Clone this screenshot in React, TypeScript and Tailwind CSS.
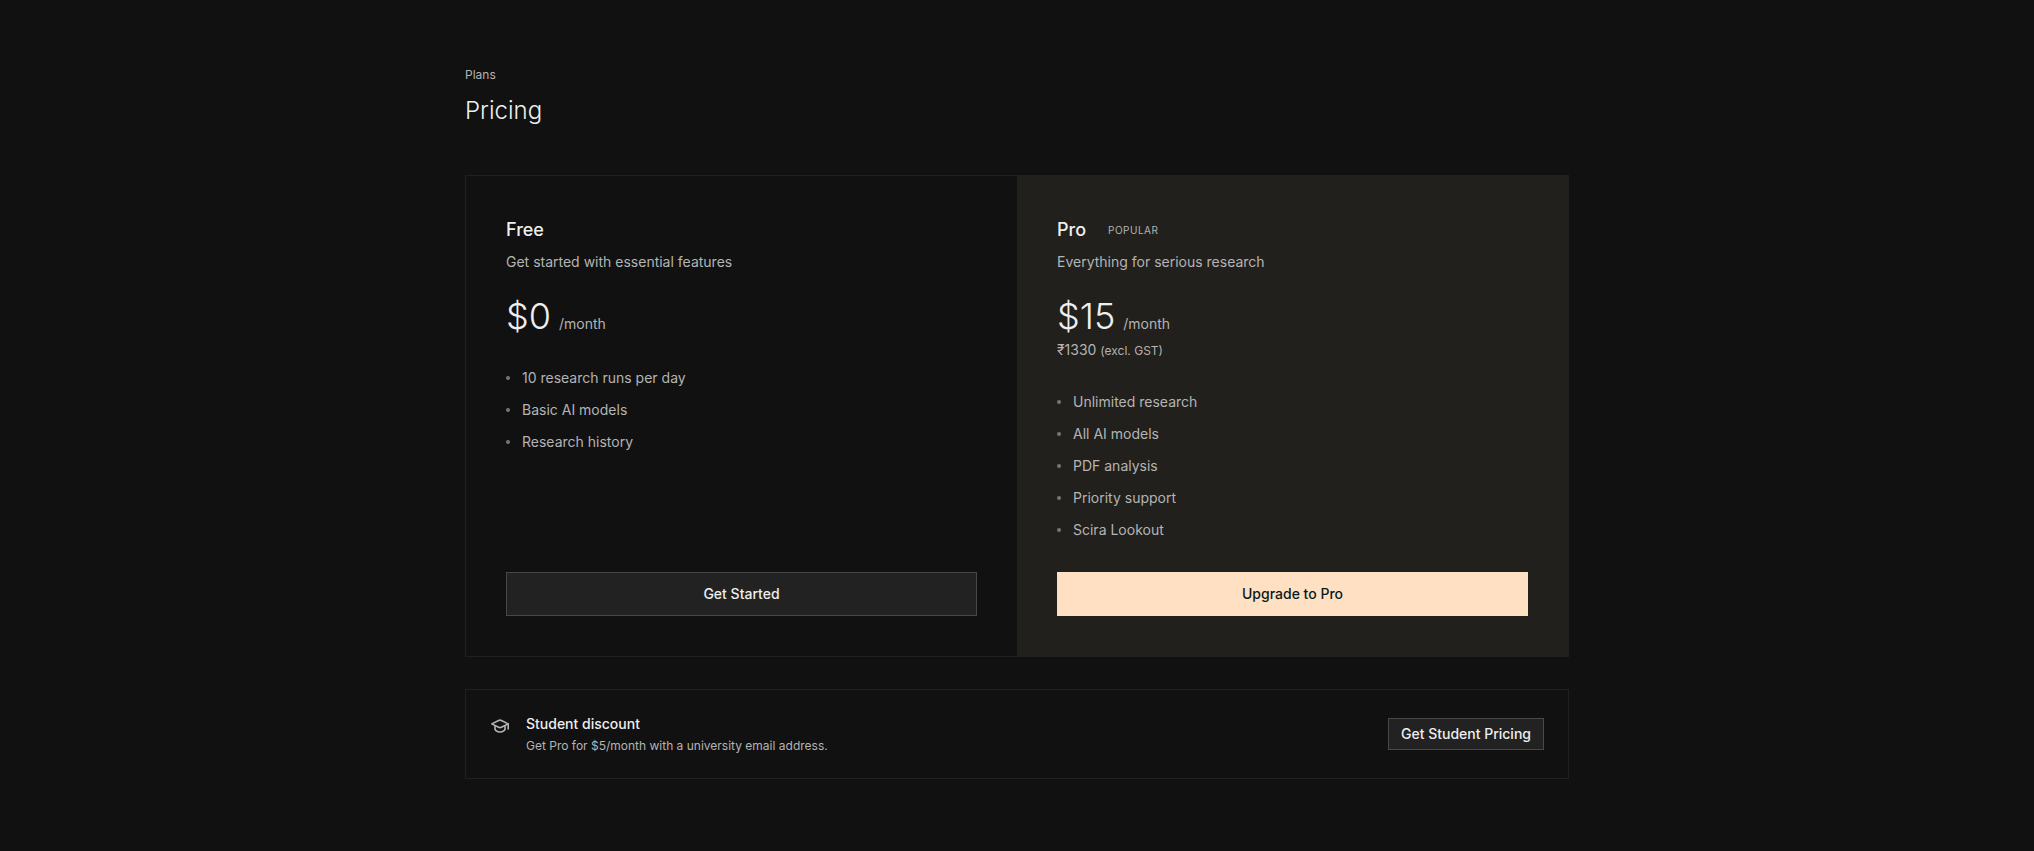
interface Plan {
  name: string;
  badge?: string;
  description: string;
  price: string;
  localPrice?: string;
  features: string[];
  cta: string;
  highlighted?: boolean;
}

const plans: Plan[] = [
  {
    name: "Free",
    description: "Get started with essential features",
    price: "$0",
    features: ["10 research runs per day", "Basic AI models", "Research history"],
    cta: "Get Started",
  },
  {
    name: "Pro",
    badge: "Popular",
    description: "Everything for serious research",
    price: "$15",
    localPrice: "₹1330",
    features: [
      "Unlimited research",
      "All AI models",
      "PDF analysis",
      "Priority support",
      "Scira Lookout",
    ],
    cta: "Upgrade to Pro",
    highlighted: true,
  },
];

function GraduationIcon() {
  return (
    <svg
      viewBox="0 0 20 20"
      fill="none"
      stroke="currentColor"
      strokeWidth="1.6"
      strokeLinecap="round"
      strokeLinejoin="round"
      className="mt-0.5 size-5 shrink-0 text-[#b4b4b4]"
      aria-hidden="true"
    >
      <path d="M1.8 7.9 L8.6 4.5 Q10 3.8 11.4 4.5 L18.2 7.9 L11.4 11.3 Q10 12 8.6 11.3 Z" />
      <path d="M5 9.8 V13.2 Q5.2 14 6 14.6 Q7.8 16 10 16 Q12.2 16 14 14.6 Q14.8 14 15 13.2 V9.8" />
      <path d="M18.2 8 V13" />
    </svg>
  );
}

function PlanCard({ plan }: { plan: Plan }) {
  return (
    <section className={`flex flex-col p-10 ${plan.highlighted ? "bg-[#21201c]" : ""}`}>
      <div className="flex items-center gap-3">
        <h2 className="text-lg font-medium">{plan.name}</h2>
        {plan.badge && (
          <span className="px-2.5 text-[10px] tracking-wider text-[#b4b4b4] uppercase">
            {plan.badge}
          </span>
        )}
      </div>
      <p className="mt-2 text-sm text-[#b4b4b4]">{plan.description}</p>

      <div className="mt-6 flex items-baseline gap-2">
        <span className="text-4xl font-light">{plan.price}</span>
        <span className="text-sm text-[#b4b4b4]">/month</span>
      </div>
      {plan.localPrice && (
        <p className="mt-1 text-sm text-[#b4b4b4]">
          {plan.localPrice} <span className="text-xs">(excl. GST)</span>
        </p>
      )}

      <ul className="mt-8 flex-1 space-y-3 text-sm text-[#b4b4b4]">
        {plan.features.map((feature) => (
          <li key={feature} className="flex items-center gap-3">
            <span className="size-1 rounded-full bg-[#777777]" />
            {feature}
          </li>
        ))}
      </ul>

      <button
        type="button"
        className={`mt-8 h-11 w-full text-sm font-medium ${
          plan.highlighted
            ? "bg-[#ffe0c2] text-[#081a1b]"
            : "border border-[#484848] bg-[#222222]"
        }`}
      >
        {plan.cta}
      </button>
    </section>
  );
}

export default function App() {
  return (
    <main className="min-h-screen bg-[#111111] font-['Inter',sans-serif] text-[#eeeeee]">
      <div className="mx-auto max-w-6xl px-6 pt-[67px] pb-16">
        <header>
          <p className="text-xs text-[#b4b4b4]">Plans</p>
          <h1 className="mt-3 text-2xl font-light">Pricing</h1>
        </header>

        <div className="mt-12 grid border border-[#21201c] md:grid-cols-2">
          {plans.map((plan) => (
            <PlanCard key={plan.name} plan={plan} />
          ))}
        </div>

        <section className="mt-8 flex items-center justify-between gap-6 border border-[#21201c] p-6">
          <div className="flex items-start gap-4">
            <GraduationIcon />
            <div>
              <h2 className="text-sm font-medium">Student discount</h2>
              <p className="mt-1 text-xs text-[#b4b4b4]">
                Get Pro for $5/month with a university email address.
              </p>
            </div>
          </div>
          <button
            type="button"
            className="h-8 shrink-0 border border-[#484848] bg-[#222222] px-3 text-sm font-medium"
          >
            Get Student Pricing
          </button>
        </section>
      </div>
    </main>
  );
}
